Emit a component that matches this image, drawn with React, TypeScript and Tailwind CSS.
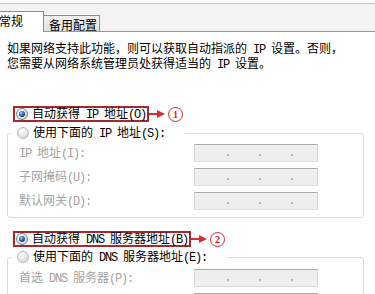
import React from 'react';

const ASCII = /^[\x00-\x7f]+$/;

// half-width runs get a mono font so they take 6px per char like the original
function Txt({ s }: { s: string }) {
  const parts = s.split(/([\x00-\x7f]+)/).filter((p) => p.length > 0);
  return (
    <>
      {parts.map((p, i) =>
        ASCII.test(p) ? (
          <span key={i} className="font-['Liberation_Mono',monospace] text-[12px] tracking-[-1.2px] whitespace-pre">
            {p}
          </span>
        ) : (
          <span key={i}>{p}</span>
        )
      )}
    </>
  );
}

function Radio({ checked }: { checked?: boolean }) {
  return (
    <svg width="12" height="12" viewBox="0 0 12 12" className="shrink-0">
      <defs>
        <radialGradient id="rb-off" cx="0.35" cy="0.3" r="0.8">
          <stop offset="0" stopColor="#ffffff" />
          <stop offset="1" stopColor="#d2d4d6" />
        </radialGradient>
        <radialGradient id="rb-dot" cx="0.4" cy="0.35" r="0.7">
          <stop offset="0" stopColor="#a8d0f4" />
          <stop offset="0.5" stopColor="#2f70bf" />
          <stop offset="1" stopColor="#0c3568" />
        </radialGradient>
      </defs>
      <circle cx="6" cy="6" r="5.5" fill="url(#rb-off)" stroke={checked ? '#7d8287' : '#b4b8bc'} />
      {checked && <circle cx="6" cy="6" r="3" fill="url(#rb-dot)" />}
    </svg>
  );
}

function IpField() {
  return (
    <div className="w-[124px] h-[18px] bg-[#eeeeee] border border-[#dadada] border-t-[#a9a9a9] flex items-center pl-[32px] gap-[30px] pt-[3px]">
      <span className="w-[2px] h-[2px] bg-[#b0b0b0]" />
      <span className="w-[2px] h-[2px] bg-[#b0b0b0]" />
      <span className="w-[2px] h-[2px] bg-[#b0b0b0]" />
    </div>
  );
}

function FieldRow({ label }: { label: string }) {
  return (
    <div className="flex items-center h-[18px]">
      <div className="w-[175px] text-[#a3a3a3] whitespace-nowrap">
        <Txt s={label} />
      </div>
      <IpField />
    </div>
  );
}

function Marked({ label, num }: { label: string; num: string }) {
  return (
    <div className="flex items-center ml-[13px] h-[16px]">
      <div className="flex items-center h-[16px] border-2 border-[#a8282c] pl-[1px] pr-[1px] gap-[4px] whitespace-nowrap">
        <Radio checked />
        <span>
          <Txt s={label} />
        </span>
      </div>
      <svg width="16" height="10" viewBox="0 0 16 10" className="shrink-0">
        <path d="M0 5H9" stroke="#d32f2f" strokeWidth="2" />
        <path d="M8 1L16 5L8 9Z" fill="#d32f2f" />
      </svg>
      <span className="ml-[3px] w-[15px] h-[15px] rounded-full border-[1.5px] border-[#d0302f] text-[#d0302f] text-[11px] leading-none font-bold font-['Liberation_Serif',serif] flex items-center justify-center">
        {num}
      </span>
    </div>
  );
}

function Group({ legend, top, children }: { legend: string; top: string; children: React.ReactNode }) {
  return (
    <fieldset className={`ml-[7px] mr-[11px] border border-[#d5dbe0] rounded-[3px] ${top}`}>
      <legend className="ml-[4px] pl-[5px] pr-[20px]">
        <div className="flex items-center gap-[4px] h-[14px] whitespace-nowrap">
          <Radio />
          <span>
            <Txt s={legend} />
          </span>
        </div>
      </legend>
      {children}
    </fieldset>
  );
}

export default function App() {
  return (
    <div className="w-[375px] h-[294px] overflow-hidden bg-white text-black text-[12px] leading-[12px] font-['Noto_Sans_CJK_SC',sans-serif]">
      {/* tab strip */}
      <div className="pt-[3px] bg-[#fafafa]">
        <div className="h-[29px] border-t border-b border-t-[#bcc8d4] border-b-[#9a9a9a] bg-[#f3f3f3] flex items-end">
          <div className="-ml-[8px] w-[52px] h-[21px] -mb-[1px] bg-white border-t border-r border-[#8c8e94] pl-[7px] pt-[3px]">
            常规
          </div>
          <div className="w-[56px] h-[16px] bg-gradient-to-b from-[#f2f2f2] to-[#e2e2e2] border-t border-r border-[#8c8e94] pl-[5px] pt-[3px]">
            备用配置
          </div>
        </div>
      </div>

      <div className="mt-[10px] pl-[7px] whitespace-nowrap leading-[11.5px]">
        <Txt s="如果网络支持此功能，则可以获取自动指派的 IP 设置。否则，" />
        <br />
        <Txt s="您需要从网络系统管理员处获得适当的 IP 设置。" />
      </div>

      <div className="mt-[35px]">
        <Marked label="自动获得 IP 地址(O)" num="1" />
      </div>

      <Group legend="使用下面的 IP 地址(S):" top="mt-[4px]">
        <div className="pl-[11px] pt-[4px] pb-[7px] flex flex-col gap-[6px]">
          <FieldRow label="IP 地址(I):" />
          <FieldRow label="子网掩码(U):" />
          <FieldRow label="默认网关(D):" />
        </div>
      </Group>

      <div className="mt-[13px]">
        <Marked label="自动获得 DNS 服务器地址(B)" num="2" />
      </div>

      <Group legend="使用下面的 DNS 服务器地址(E):" top="mt-[3px]">
        <div className="pl-[11px] pt-[5px] pb-[7px] flex flex-col gap-[6px]">
          <FieldRow label="首选 DNS 服务器(P):" />
          <FieldRow label="备用 DNS 服务器(A):" />
        </div>
      </Group>
    </div>
  );
}
